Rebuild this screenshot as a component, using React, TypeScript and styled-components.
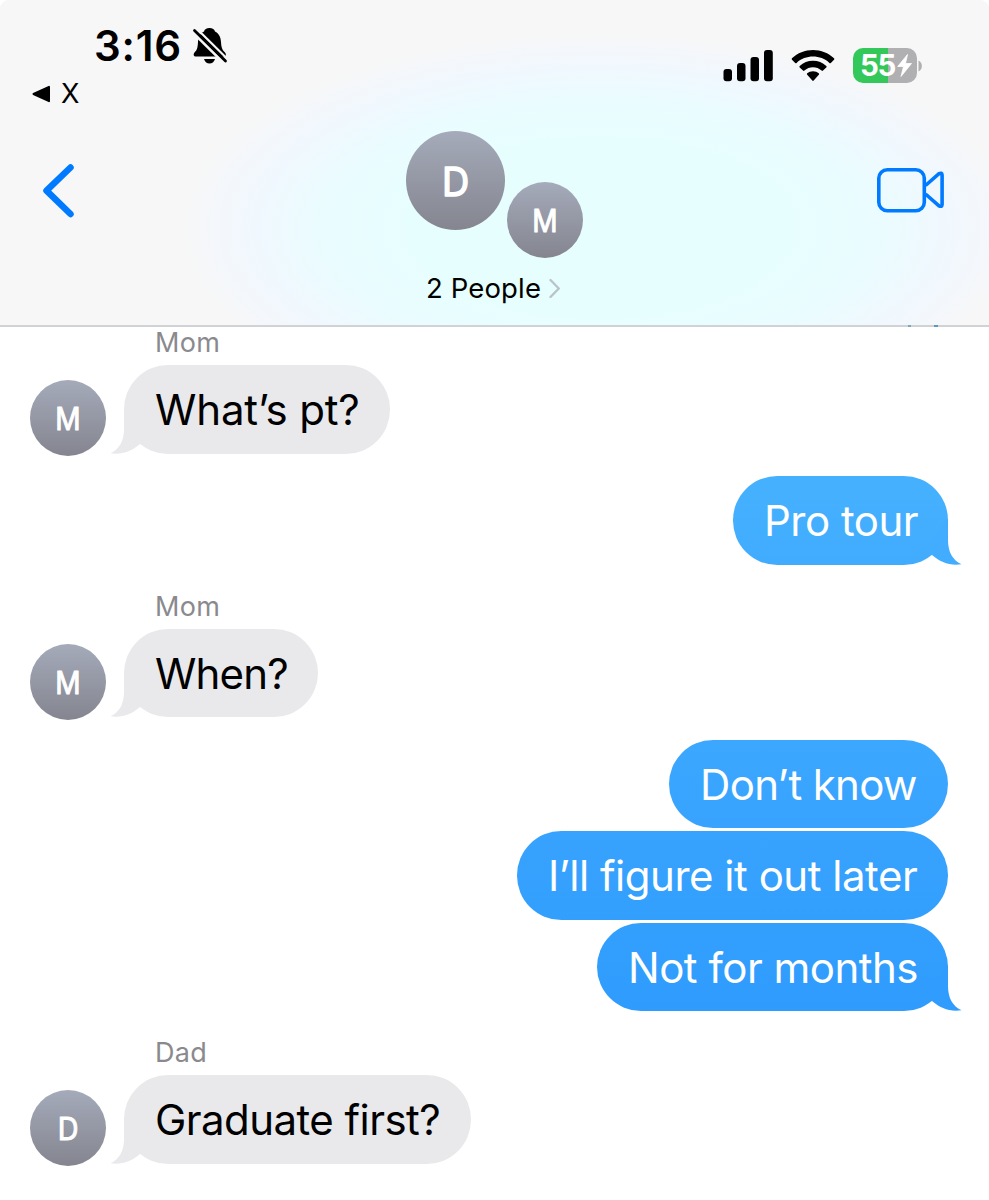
import React from "react";
import styled, { createGlobalStyle } from "styled-components";

const GlobalStyle = createGlobalStyle`
  * { box-sizing: border-box; }
  body {
    margin: 0;
    background: #fff;
    font-family: Inter, "Liberation Sans", sans-serif;
    color: #000;
  }
`;

const Screen = styled.main`
  width: 989px;
  height: 1200px;
  overflow: hidden;
  display: flex;
  flex-direction: column;
  background: #fff;
`;

const Header = styled.header`
  position: relative;
  height: 327px;
  flex: none;
  border-bottom: 2px solid #cfd3d6;
  border-radius: 9px 9px 0 0;
  background:
    radial-gradient(ellipse 420px 195px at 600px 228px, #e7feff 0%, #e7feff 45%, #eafcff 66%, #f0f8fe 82%, #f4f7fb 92%, #f7f7f7 100%),
    #f7f7f7;
`;

const Peek = styled.svg`
  position: absolute;
  left: 906px;
  bottom: -2px;
`;

const StatusBar = styled.div`
  height: 125px;
  display: flex;
  justify-content: space-between;
`;

const StatusLeft = styled.div`
  padding-top: 26px;
`;

const ClockRow = styled.div`
  display: flex;
  align-items: center;
  height: 40px;
  padding-left: 94px;
`;

const Clock = styled.span`
  width: 98px;
  font-size: 42px;
  font-weight: 600;
  line-height: 40px;
  letter-spacing: 0.8px;
  white-space: nowrap;
`;

const ReturnRow = styled.div`
  display: flex;
  align-items: center;
  gap: 10px;
  height: 26px;
  margin-top: 15px;
  padding-left: 32px;
  font-size: 27px;
  line-height: 28px;
`;

const StatusRight = styled.div`
  display: flex;
  align-items: flex-start;
  gap: 18px;
  padding: 48px 72px 0 0;
`;

const Battery = styled.div`
  position: relative;
  width: 64px;
  height: 35px;
  border-radius: 10px;
  background: linear-gradient(90deg, #34c759 0 35px, #b0b0b2 35px);
  display: flex;
  align-items: center;
  gap: 2px;
  padding-left: 7px;
  color: #fff;
  font-size: 29.5px;
  font-weight: 700;
  line-height: 35px;
  letter-spacing: -1.4px;
`;

const BatteryCap = styled.svg`
  position: absolute;
  left: 65px;
  top: 12px;
`;

const NavBar = styled.nav`
  height: 132px;
  display: flex;
  justify-content: space-between;
  align-items: flex-start;
`;

const BackIcon = styled.svg`
  margin: 36px 0 0 40px;
`;

const VideoIcon = styled.svg`
  margin: 41px 43px 0 0;
`;

const AvatarPair = styled.div`
  display: flex;
  align-items: flex-start;
  gap: 2px;
  padding: 5.5px 0 0 35px;
`;

const AvatarSvg = styled.svg<{ $drop?: number }>`
  display: block;
  flex: none;
  margin-top: ${(p) => p.$drop ?? 0}px;
`;

const Title = styled.div`
  display: flex;
  justify-content: center;
  align-items: center;
  gap: 8px;
  height: 62px;
  padding-right: 2px;
  font-size: 27.5px;
  letter-spacing: 0.15px;
`;

const Thread = styled.section`
  flex: 1;
  display: flex;
  flex-direction: column;
  padding: 0 41px 0 30px;
`;

const Sender = styled.div`
  height: 30px;
  margin-left: 125px;
  font-size: 27px;
  line-height: 32px;
  letter-spacing: 0.3px;
  color: #8a8a8e;
`;

const Received = styled.div<{ $top: number }>`
  margin-top: ${(p) => p.$top}px;
`;

const ReceivedRow = styled.div`
  display: flex;
  align-items: flex-start;
  gap: 18px;
  height: 91px;
  margin-top: 8px;
`;

const Sent = styled.div`
  display: flex;
  flex-direction: column;
  align-items: flex-end;
  gap: 3px;
  margin-top: 20px;
`;

const Bubble = styled.div<{ $width: number; $tracking: number; $fill: string; $ink: string }>`
  position: relative;
  isolation: isolate;
  width: ${(p) => p.$width}px;
  height: 88.5px;
  padding-left: 31px;
  border-radius: 44.25px;
  background: ${(p) => p.$fill};
  color: ${(p) => p.$ink};
  font-size: 42px;
  line-height: 89px;
  letter-spacing: ${(p) => p.$tracking}px;
  white-space: nowrap;
`;

const TailSvg = styled.svg<{ $side: "left" | "right" }>`
  position: absolute;
  z-index: -1;
  bottom: 0;
  ${(p) => p.$side}: -14px;
  transform: ${(p) => (p.$side === "right" ? "scaleX(-1)" : "none")};
`;

const GRAY = "#e9e9eb";

function Tail({ side, color }: { side: "left" | "right"; color: string }) {
  return (
    <TailSvg $side={side} width="40" height="46" viewBox="0 0 40 46" fill={color}>
      <path d="M14 0 V21 C14 32 10 41 0.5 45.2 C12 47 22 43 30 36 L36 30 Z" />
    </TailSvg>
  );
}

function Avatar({ letter, size, drop, id }: { letter: string; size: number; drop?: number; id: string }) {
  const large = size > 90;
  const font = large ? 40 : 30.5;
  const glyphWidth = (letter === "M" ? 0.83 : 0.68) * font;
  return (
    <AvatarSvg $drop={drop} width={size} height={size} viewBox={`0 0 ${size} ${size}`}>
      <defs>
        <linearGradient id={id} x1="0" y1="0" x2="0" y2="1">
          <stop offset="0" stopColor="#a5abba" />
          <stop offset="1" stopColor="#84858f" />
        </linearGradient>
      </defs>
      <circle cx={size / 2} cy={size / 2} r={size / 2} fill={`url(#${id})`} />
      <text
        x={size / 2}
        y={size / 2 + font * 0.3636 + 1}
        textAnchor="middle"
        textLength={glyphWidth}
        lengthAdjust="spacingAndGlyphs"
        fontSize={font}
        fontWeight="400"
        fill="#fff"
        stroke="#fff"
        strokeWidth={large ? 1.5 : 1}
        strokeLinejoin="round"
      >
        {letter}
      </text>
    </AvatarSvg>
  );
}

function Incoming(props: { from: string; text: string; width: number; tracking: number; top: number }) {
  return (
    <Received $top={props.top}>
      <Sender>{props.from}</Sender>
      <ReceivedRow>
        <Avatar letter={props.from[0]} size={76} drop={15} id={`in-${props.width}`} />
        <Bubble $width={props.width} $tracking={props.tracking} $fill={GRAY} $ink="#000">
          {props.text}
          <Tail side="left" color={GRAY} />
        </Bubble>
      </ReceivedRow>
    </Received>
  );
}

export default function App() {
  return (
    <Screen>
      <GlobalStyle />
      <Header>
        <StatusBar>
          <StatusLeft>
            <ClockRow>
              <Clock>3:16</Clock>
              <svg width="36" height="38" viewBox="0 0 36 38">
                <path d="M17.5 1 C20.500 1 22.500 2.500 23 4.500 C27 6.500 28.700 10 29 15 C29.300 21 30.500 23 33 25.500 C34.500 27.500 34 29.500 32 29.500 H4 C1.500 29.500 1 27.500 2.500 25.500 C5 23 5.700 21 6 15 C6.300 10 8 6.500 12 4.500 C12.500 2.500 14.500 1 17.500 1 Z" />
                <path d="M12 32 H23 C22 35 20 36.500 17.500 36.500 C15 36.500 13 35 12 32 Z" />
                <path d="M0 4.500 L34 38" stroke="#f7f7f7" strokeWidth="3" />
                <path d="M3 0 L36 32.500" stroke="#f7f7f7" strokeWidth="2.200" />
                <path d="M2.500 3.500 L33.500 34" stroke="#000" strokeWidth="2.800" strokeLinecap="round" />
              </svg>
            </ClockRow>
            <ReturnRow>
              <svg width="19" height="18" viewBox="0 0 19 18">
                <path d="M1.500 9 L17 1.800 V16.200 Z" stroke="#000" strokeWidth="2" strokeLinejoin="round" />
              </svg>
              <span>X</span>
            </ReturnRow>
          </StatusLeft>
          <StatusRight>
            <svg width="50" height="34" viewBox="0 0 50 34">
              <rect x="0.500" y="21" width="8.500" height="12.300" rx="3" />
              <rect x="14" y="15" width="8.500" height="18.300" rx="3" />
              <rect x="27.500" y="9" width="8.500" height="24.300" rx="3" />
              <rect x="41" y="2" width="8.800" height="31.300" rx="3" />
            </svg>
            <svg width="44" height="34" viewBox="0 0 44 34">
              <path d="M22 2 C30 2 37.500 5 43 10.300 C43.500 10.800 43.500 11.200 43 11.700 L39.800 14.900 C39.300 15.400 38.900 15.400 38.400 14.900 C34 10.800 28 8.600 22 8.600 C16 8.600 10 10.800 5.600 14.900 C5.100 15.400 4.700 15.400 4.200 14.900 L1 11.700 C0.500 11.200 0.500 10.800 1 10.300 C6.500 5 14 2 22 2 Z" />
              <path d="M22 12.700 C27 12.700 31.700 14.600 35.300 18 C35.800 18.500 35.800 18.900 35.300 19.400 L32 22.600 C31.500 23.100 31.100 23.100 30.600 22.600 C28.200 20.400 25.200 19.200 22 19.200 C18.800 19.200 15.800 20.400 13.400 22.600 C12.900 23.100 12.500 23.100 12 22.600 L8.700 19.400 C8.200 18.900 8.200 18.500 8.700 18 C12.300 14.600 17 12.700 22 12.700 Z" />
              <path d="M22 23.200 C24.300 23.200 26.200 24 27.800 25.300 C28.300 25.800 28.300 26.200 27.800 26.700 L22.700 32.500 C22.200 33.100 21.800 33.100 21.300 32.500 L16.200 26.700 C15.700 26.200 15.700 25.800 16.200 25.300 C17.800 24 19.700 23.200 22 23.200 Z" />
            </svg>
            <Battery>
              <span>55</span>
              <svg width="15" height="23" viewBox="0 0 15 23" fill="#fff">
                <path d="M10.500 0.500 L0.700 12.500 H6.500 L4 22.500 L14.500 9.500 H8.500 Z" stroke="#fff" strokeWidth="0.800" strokeLinejoin="round" />
              </svg>
              <BatteryCap width="5" height="12" viewBox="0 0 5 12" fill="#b0b0b2">
                <path d="M0.500 0.500 C5 2.500 5 9.500 0.500 11.500 Z" />
              </BatteryCap>
            </Battery>
          </StatusRight>
        </StatusBar>
        <NavBar>
          <BackIcon width="38" height="60" viewBox="0 0 38 60" fill="none">
            <path d="M30.500 6.500 L6.500 29.700 L30.500 53" stroke="#007aff" strokeWidth="6.500" strokeLinecap="round" strokeLinejoin="round" />
          </BackIcon>
          <AvatarPair>
            <Avatar letter="D" size={99} id="head-d" />
            <Avatar letter="M" size={76} drop={51} id="head-m" />
          </AvatarPair>
          <VideoIcon width="70" height="48" viewBox="0 0 70 48" fill="none" stroke="#007aff" strokeWidth="3.600" strokeLinejoin="round">
            <rect x="2.800" y="3.800" width="45.500" height="41" rx="8.500" />
            <path d="M49.500 19.500 L63 7.700 Q66 6.200 66.100 9 V38.500 Q66 41.300 63 39.800 L49.500 28" />
          </VideoIcon>
        </NavBar>
        <Title>
          <span>2 People</span>
          <svg width="12" height="20" viewBox="0 0 12 20" fill="none">
            <path d="M1.500 2 L9.800 10.500 L1.500 19" stroke="#b9c3cb" strokeWidth="2.400" strokeLinecap="round" strokeLinejoin="round" />
          </svg>
        </Title>
        <Peek width="34" height="2" viewBox="0 0 34 2" fill="#7fa5bf">
          <rect x="2" y="0" width="3" height="2" />
          <rect x="28" y="0" width="4" height="2" fill="#5f97c4" />
        </Peek>
      </Header>
      <Thread>
        <Incoming from="Mom" text="What’s pt?" width={266} tracking={-0.15} top={0} />
        <Sent>
          <Bubble $width={215} $tracking={-0.5} $fill="linear-gradient(#45b1fe, #41acfe)" $ink="#fff">
            Pro tour
            <Tail side="right" color="#42adfe" />
          </Bubble>
        </Sent>
        <Incoming from="Mom" text="When?" width={194} tracking={-0.8} top={26} />
        <Sent>
          <Bubble $width={279} $tracking={-0.65} $fill="linear-gradient(#3ca7fe, #38a3fe)" $ink="#fff">
            Don’t know
          </Bubble>
          <Bubble $width={431} $tracking={-0.48} $fill="linear-gradient(#38a3fe, #339ffd)" $ink="#fff">
            I’ll figure it out later
          </Bubble>
          <Bubble $width={351} $tracking={-0.5} $fill="linear-gradient(#339ffd, #2f9bfd)" $ink="#fff">
            Not for months
            <Tail side="right" color="#309cfd" />
          </Bubble>
        </Sent>
        <Incoming from="Dad" text="Graduate first?" width={347} tracking={-0.55} top={26} />
      </Thread>
    </Screen>
  );
}
